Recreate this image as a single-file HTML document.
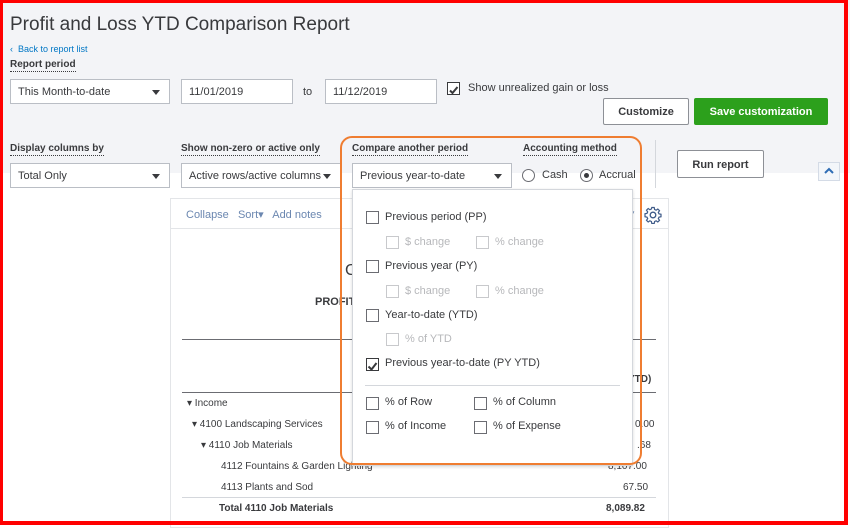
<!DOCTYPE html>
<html><head><meta charset="utf-8"><style>
*{box-sizing:border-box;margin:0;padding:0}
body{width:850px;height:526px;overflow:hidden;font-family:"Liberation Sans",sans-serif;color:#393a3d;background:#fff;position:relative}
.a{position:absolute}
.gray{left:0;top:0;width:850px;height:173px;background:#f3f4f7}
.lbl{font-size:10px;font-weight:bold;color:#393a3d;border-bottom:1px dotted #393a3d;line-height:13px}
.inp{background:#fff;border:1px solid #babec5;font-size:11px;padding-left:7px;line-height:25px;height:25px}
.caret{position:absolute;right:9px;top:10px;width:0;height:0;border-left:4px solid transparent;border-right:4px solid transparent;border-top:5px solid #393a3d}
.btn{border:1px solid #8d9096;border-radius:2px;background:#fff;font-size:11px;font-weight:bold;text-align:center}
.cb{width:13px;height:13px;border:1px solid #6b6c72;background:#fff}
.cbd{width:13px;height:13px;border:1px solid #c8c9cc}
.t{font-size:11px;color:#393a3d;white-space:nowrap;line-height:13px}
.td{font-size:11px;color:#b7b8bb;white-space:nowrap;line-height:13px}
.r{font-size:10px;color:#393a3d;white-space:nowrap}
</style></head><body>
<div class="a gray"></div>
<div class="a" style="left:10px;top:14px;font-size:19px;color:#393a3d">Profit and Loss YTD Comparison Report</div>
<div class="a" style="left:10px;top:44px;font-size:9px;color:#0077c5">&#8249;&nbsp; Back to report list</div>
<div class="a lbl" style="left:10px;top:58px">Report period</div>
<div class="a inp" style="left:10px;top:79px;width:160px">This Month-to-date<span class="caret"></span></div>
<div class="a inp" style="left:181px;top:79px;width:112px">11/01/2019</div>
<div class="a t" style="left:303px;top:86px">to</div>
<div class="a inp" style="left:325px;top:79px;width:112px">11/12/2019</div>
<div class="a cb" style="left:447px;top:82px;border-color:#393a3d"><svg width="11" height="11" viewBox="0 0 11 11"><path d="M2 5.5L4.5 8L9.5 2" stroke="#393a3d" stroke-width="2" fill="none"/></svg></div>
<div class="a t" style="left:468px;top:82px">Show unrealized gain or loss</div>
<div class="a btn" style="left:603px;top:98px;width:86px;height:27px;line-height:27px">Customize</div>
<div class="a btn" style="left:694px;top:98px;width:134px;height:27px;line-height:27px;background:#2ca01c;border-color:#2ca01c;color:#fff">Save customization</div>
<div class="a lbl" style="left:10px;top:142px">Display columns by</div>
<div class="a inp" style="left:10px;top:163px;width:160px">Total Only<span class="caret"></span></div>
<div class="a lbl" style="left:181px;top:142px">Show non-zero or active only</div>
<div class="a inp" style="left:181px;top:163px;width:160px;overflow:hidden;white-space:nowrap">Active rows/active columns<span class="caret" style="right:9px"></span></div>
<div class="a lbl" style="left:352px;top:142px">Compare another period</div>
<div class="a inp" style="left:352px;top:163px;width:160px">Previous year-to-date<span class="caret"></span></div>
<div class="a lbl" style="left:523px;top:142px">Accounting method</div>
<div class="a" style="left:522px;top:169px;width:13px;height:13px;border:1px solid #6b6c72;border-radius:50%;background:#fff"></div>
<div class="a t" style="left:542px;top:169px">Cash</div>
<div class="a" style="left:580px;top:169px;width:13px;height:13px;border:1px solid #6b6c72;border-radius:50%;background:#fff"><div style="margin:3px;width:5px;height:5px;border-radius:50%;background:#393a3d"></div></div>
<div class="a t" style="left:599px;top:169px">Accrual</div>
<div class="a" style="left:655px;top:140px;width:1px;height:48px;background:#d4d7dc"></div>
<div class="a btn" style="left:677px;top:150px;width:87px;height:28px;line-height:28px">Run report</div>
<div class="a" style="left:818px;top:162px;width:22px;height:19px;border:1px solid #d4dbe6;background:#f3f6fa"><svg width="20" height="17" viewBox="0 0 20 17"><path d="M6 10L10 6L14 10" stroke="#2f6db5" stroke-width="2" fill="none"/></svg></div>

<!-- report card -->
<div class="a" style="left:170px;top:198px;width:499px;height:330px;border:1px solid #e3e5e8;background:#fff"></div>
<div class="a" style="left:170px;top:228px;width:499px;height:1px;background:#e3e5e8"></div>
<div class="a" style="left:186px;top:208px;font-size:11px;color:#6b87b0">Collapse&nbsp;&nbsp; Sort&#9662;&nbsp;&nbsp; Add notes</div>
<div class="a" style="left:644px;top:206px"><svg width="18" height="18" viewBox="0 0 18 18"><circle cx="9" cy="9" r="2.8" stroke="#3e5a88" stroke-width="1.3" fill="none"/><path d="M7.8 1.5h2.4l.4 2 1.5.7 1.7-1.2 1.7 1.7-1.2 1.7.7 1.5 2 .4v2.4l-2 .4-.7 1.5 1.2 1.7-1.7 1.7-1.7-1.2-1.5.7-.4 2H7.8l-.4-2-1.5-.7-1.7 1.2-1.7-1.7 1.2-1.7-.7-1.5-2-.4V7.8l2-.4.7-1.5-1.2-1.7 1.7-1.7 1.7 1.2 1.5-.7z" stroke="#3e5a88" stroke-width="1.2" fill="none"/></svg></div>
<div class="a" style="left:628px;top:209px;font-size:8px;color:#6b87b0">&#9660;</div>
<div class="a" style="left:345px;top:262px;font-size:16px">C</div>
<div class="a" style="left:315px;top:296px;font-size:11px;font-weight:bold">PROFIT</div>
<div class="a" style="left:182px;top:339px;width:474px;height:1px;background:#6b6c72"></div>
<div class="a" style="left:182px;top:392px;width:474px;height:1px;background:#6b6c72"></div>
<div class="a" style="left:628px;top:374px;font-size:10px;font-weight:bold">YTD)</div>
<div class="a r" style="left:187px;top:398px">&#9662; Income</div>
<div class="a r" style="left:192px;top:419px">&#9662; 4100 Landscaping Services</div>
<div class="a r" style="left:201px;top:440px">&#9662; 4110 Job Materials</div>
<div class="a r" style="left:221px;top:461px">4112 Fountains &amp; Garden Lighting</div>
<div class="a r" style="left:221px;top:482px">4113 Plants and Sod</div>
<div class="a" style="left:182px;top:497px;width:474px;height:1px;background:#d4d7dc"></div>
<div class="a r" style="left:219px;top:503px;font-weight:bold">Total 4110 Job Materials</div>
<div class="a r" style="left:635px;top:419px">0.00</div>
<div class="a r" style="left:637px;top:440px">.68</div>
<div class="a r" style="left:608px;top:461px">8,107.00</div>
<div class="a r" style="left:623px;top:482px">67.50</div>
<div class="a r" style="left:606px;top:503px;font-weight:bold">8,089.82</div>

<!-- dropdown -->
<div class="a" style="left:352px;top:189px;width:281px;height:277px;background:#fff;border:1px solid #d4d7dc;box-shadow:0 1px 3px rgba(0,0,0,.15)"></div>
<div class="a" style="left:340px;top:136px;width:302px;height:329px;border:2px solid #ef7d31;border-radius:12px"></div>
<div class="a cb" style="left:366px;top:211px"></div><div class="a t" style="left:385px;top:211px">Previous period (PP)</div>
<div class="a cbd" style="left:386px;top:236px"></div><div class="a td" style="left:405px;top:236px">$ change</div>
<div class="a cbd" style="left:476px;top:236px"></div><div class="a td" style="left:495px;top:236px">% change</div>
<div class="a cb" style="left:366px;top:260px"></div><div class="a t" style="left:385px;top:260px">Previous year (PY)</div>
<div class="a cbd" style="left:386px;top:285px"></div><div class="a td" style="left:405px;top:285px">$ change</div>
<div class="a cbd" style="left:476px;top:285px"></div><div class="a td" style="left:495px;top:285px">% change</div>
<div class="a cb" style="left:366px;top:309px"></div><div class="a t" style="left:385px;top:309px">Year-to-date (YTD)</div>
<div class="a cbd" style="left:386px;top:333px"></div><div class="a td" style="left:405px;top:333px">% of YTD</div>
<div class="a cb" style="left:366px;top:358px;border-color:#393a3d"><svg width="11" height="11" viewBox="0 0 11 11"><path d="M1.5 5.5L4.5 8.5L9.5 2" stroke="#393a3d" stroke-width="2" fill="none"/></svg></div>
<div class="a t" style="left:385px;top:357px">Previous year-to-date (PY YTD)</div>
<div class="a" style="left:365px;top:385px;width:255px;height:1px;background:#d4d7dc"></div>
<div class="a cb" style="left:366px;top:397px"></div><div class="a t" style="left:385px;top:396px">% of Row</div>
<div class="a cb" style="left:474px;top:397px"></div><div class="a t" style="left:493px;top:396px">% of Column</div>
<div class="a cb" style="left:366px;top:421px"></div><div class="a t" style="left:385px;top:420px">% of Income</div>
<div class="a cb" style="left:474px;top:421px"></div><div class="a t" style="left:493px;top:420px">% of Expense</div>

<!-- red frame -->
<div class="a" style="left:0;top:0;width:848px;height:525px;border-style:solid;border-color:#f00;border-width:3px 4px 4px 3px"></div>
</body></html>
